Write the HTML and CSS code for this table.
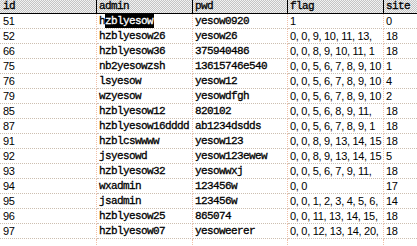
FILE: index.html
```html
<!DOCTYPE html>
<html lang="en">
<head>
    <meta charset="UTF-8">
    <title>admin</title>
    <link rel="stylesheet" href="styles.css">
</head>
<body>
    <div id="grid">
        <div class="row head">
            <div class="cell">id</div>
            <div class="cell">admin</div>
            <div class="cell">pwd</div>
            <div class="cell">flag</div>
            <div class="cell">site</div>
        </div>
        <div class="row">
            <div class="cell num">51</div>
            <div class="cell txt">h<span class="sel">zblyesow</span></div>
            <div class="cell txt">yesow0920</div>
            <div class="cell num">1</div>
            <div class="cell num">0</div>
        </div>
        <div class="row">
            <div class="cell num">52</div>
            <div class="cell txt">hzblyesow26</div>
            <div class="cell txt">yesow26</div>
            <div class="cell num">0, 0, 9, 10, 11, 13,</div>
            <div class="cell num">18</div>
        </div>
        <div class="row">
            <div class="cell num">66</div>
            <div class="cell txt">hzblyesow36</div>
            <div class="cell txt">375940486</div>
            <div class="cell num">0, 0, 8, 9, 10, 11, 1</div>
            <div class="cell num">18</div>
        </div>
        <div class="row">
            <div class="cell num">75</div>
            <div class="cell txt">nb2yesowzsh</div>
            <div class="cell txt">13615746e540</div>
            <div class="cell num">0, 0, 5, 6, 7, 8, 9, 10</div>
            <div class="cell num">1</div>
        </div>
        <div class="row">
            <div class="cell num">76</div>
            <div class="cell txt">lsyesow</div>
            <div class="cell txt">yesow12</div>
            <div class="cell num">0, 0, 5, 6, 7, 8, 9, 10</div>
            <div class="cell num">4</div>
        </div>
        <div class="row">
            <div class="cell num">79</div>
            <div class="cell txt">wzyesow</div>
            <div class="cell txt">yesowdfgh</div>
            <div class="cell num">0, 0, 5, 6, 7, 8, 9, 10</div>
            <div class="cell num">2</div>
        </div>
        <div class="row">
            <div class="cell num">85</div>
            <div class="cell txt">hzblyesow12</div>
            <div class="cell txt">820102</div>
            <div class="cell num">0, 0, 5, 6, 8, 9, 11,</div>
            <div class="cell num">18</div>
        </div>
        <div class="row">
            <div class="cell num">87</div>
            <div class="cell txt">hzblyesow16dddd</div>
            <div class="cell txt">ab1234dsdds</div>
            <div class="cell num">0, 0, 5, 6, 7, 8, 9, 1</div>
            <div class="cell num">18</div>
        </div>
        <div class="row">
            <div class="cell num">91</div>
            <div class="cell txt">hzblcswwww</div>
            <div class="cell txt">yesow123</div>
            <div class="cell num">0, 0, 8, 9, 13, 14, 15</div>
            <div class="cell num">18</div>
        </div>
        <div class="row">
            <div class="cell num">92</div>
            <div class="cell txt">jsyesowd</div>
            <div class="cell txt">yesow123ewew</div>
            <div class="cell num">0, 0, 8, 9, 13, 14, 15</div>
            <div class="cell num">5</div>
        </div>
        <div class="row">
            <div class="cell num">93</div>
            <div class="cell txt">hzblyesow32</div>
            <div class="cell txt">yesowwxj</div>
            <div class="cell num">0, 0, 5, 6, 7, 9, 11,</div>
            <div class="cell num">18</div>
        </div>
        <div class="row">
            <div class="cell num">94</div>
            <div class="cell txt">wxadmin</div>
            <div class="cell txt">123456w</div>
            <div class="cell num">0, 0</div>
            <div class="cell num">17</div>
        </div>
        <div class="row">
            <div class="cell num">95</div>
            <div class="cell txt">jsadmin</div>
            <div class="cell txt">123456w</div>
            <div class="cell num">0, 0, 1, 2, 3, 4, 5, 6,</div>
            <div class="cell num">14</div>
        </div>
        <div class="row">
            <div class="cell num">96</div>
            <div class="cell txt">hzblyesow25</div>
            <div class="cell txt">865074</div>
            <div class="cell num">0, 0, 11, 13, 14, 15,</div>
            <div class="cell num">18</div>
        </div>
        <div class="row">
            <div class="cell num">97</div>
            <div class="cell txt">hzblyesow07</div>
            <div class="cell txt">yesoweerer</div>
            <div class="cell num">0, 0, 12, 13, 14, 20,</div>
            <div class="cell num">18</div>
        </div>
        <div class="row tail">
            <div class="cell"></div>
            <div class="cell"></div>
            <div class="cell"></div>
            <div class="cell"></div>
            <div class="cell"></div>
        </div>
    </div>
</body>
</html>
```

FILE: styles.css
```css
*{
    margin:0;
    padding:0;
    box-sizing:border-box;
}
body{
    background:#fff;
    overflow:hidden;
}
#grid{
    width:417px;
    overflow:hidden;
    font-family:"Liberation Mono", monospace;
    color:#000;
}
.row{
    display:grid;
    grid-template-columns:97px 96px 95px 96px 33px;
    height:15px;
}
.row .cell{
    overflow:hidden;
    white-space:nowrap;
    padding-left:2px;
    border-right:1px dotted #f0bfa8;
    border-bottom:1px dotted #cdbfb0;
    height:15px;
    line-height:14px;
    font-size:11px;
    letter-spacing:-0.6px;
    -webkit-text-stroke:0.3px #000;
}
.row .cell:first-child{
    padding-left:3px;
}
.row .cell:last-child{
    border-right:none;
}
.head{
    height:14px;
    background-color:#fff;
    background-image:repeating-conic-gradient(#c4c4c4 0 25%, #f2f2f2 0 50%);
    background-size:2px 2px;
}
.head .cell{
    height:14px;
    line-height:13px;
    border-right:1px solid #000;
    border-bottom:1px solid #000;
}
.num{
    font-family:"Liberation Sans", Arial, sans-serif;
    font-size:11px !important;
    letter-spacing:-0.3px !important;
    -webkit-text-stroke:0 !important;
}
.sel{
    display:inline-block;
    background:#000;
    color:#fff;
    height:14px;
    padding-right:1px;
    -webkit-text-stroke:0.3px #fff;
}
.tail .cell{
    border-bottom:none;
    height:8px;
}
```
